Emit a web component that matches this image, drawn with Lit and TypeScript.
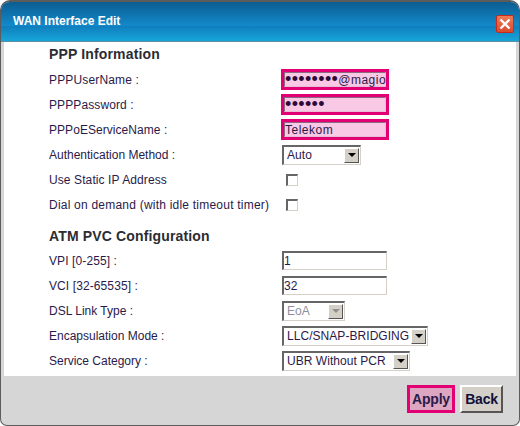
import { LitElement, html, css } from 'lit';
import { customElement } from 'lit/decorators.js';

@customElement('app-root')
export class AppRoot extends LitElement {
  static styles = css`
    :host {
      display: block;
      width: 520px;
      height: 426px;
      background: #fff;
      font-family: 'Liberation Sans', Arial, sans-serif;
      font-size: 12px;
      color: #2a1a4a;
    }
    .win {
      box-sizing: border-box;
      width: 520px;
      height: 426px;
      border: 1px solid #5c5c5c;
      border-top-width: 2px;
      border-radius: 10px 10px 7px 7px;
      overflow: hidden;
      background: #d6d6d6;
      display: flex;
      flex-direction: column;
    }
    .head {
      box-sizing: border-box;
      height: 40px;
      flex: none;
      padding: 0 5px 0 12px;
      display: flex;
      align-items: center;
      justify-content: space-between;
      background: linear-gradient(#0b5d90 0, #1389cb 24px, #0f7dbd 24px, #17a6d8 39px, #5f8fa5 39px);
    }
    .title {
      color: #fff;
      font-weight: bold;
      font-size: 12px;
      margin-top: -2px;
    }
    .close {
      box-sizing: border-box;
      width: 18px;
      height: 18px;
      margin-top: 4px;
      border: 1px solid #c62a1b;
      border-radius: 2px;
      background: linear-gradient(#ee7b58, #da4a2c);
      display: block;
    }
    .body {
      flex: none;
      height: 334px;
      margin: 0 3px;
      background: #fff;
      padding: 0 0 0 45px;
      box-sizing: border-box;
    }
    h2 {
      margin: 0;
      height: 25px;
      line-height: 25px;
      font-size: 14px;
      color: #2c2c33;
      letter-spacing: 0.15px;
    }
    h2.second {
      margin-top: 7px;
      height: 24px;
    }
    .row {
      height: 25px;
      display: flex;
      align-items: center;
    }
    .label {
      width: 233px;
      flex: none;
      white-space: nowrap;
    }
    input[type='text'],
    .field {
      box-sizing: border-box;
      width: 105px;
      height: 19px;
      margin: 0;
      padding: 0;
      border: 2px solid #666;
      border-right: 1px solid #d4d0c8;
      border-bottom: 1px solid #d4d0c8;
      background: #fff;
      color: #2a1a4a;
      font: 12px 'Liberation Sans', Arial, sans-serif;
      letter-spacing: 0.2px;
      outline: none;
    }
    .pink {
      box-sizing: border-box;
      width: 108px;
      height: 21px;
      margin-left: -1px;
      border: 3px solid #e20074;
      display: flex;
    }
    .pink .field {
      width: 102px;
      height: 15px;
      border: 1px solid #8a6a80;
      border-right-color: #e4c0d4;
      border-bottom-color: #e4c0d4;
      background: #f9c8e4;
      line-height: 14px;
      letter-spacing: 0.5px;
      white-space: nowrap;
    }
    .dots {
      font-size: 18px;
      line-height: 0;
      letter-spacing: 0.35px;
      vertical-align: -1px;
      color: #2c0a3a;
    }
    .sel {
      box-sizing: border-box;
      height: 20px;
      display: flex;
      align-items: center;
      justify-content: space-between;
      border: 2px solid #666;
      border-right: 1px solid #d4d0c8;
      border-bottom: 1px solid #d4d0c8;
      padding-left: 3px;
      background: #fff;
      white-space: nowrap;
      letter-spacing: 0.05px;
    }
    .sel.off {
      color: #8f8f9c;
    }
    .arrow {
      box-sizing: border-box;
      width: 15px;
      height: 15px;
      flex: none;
      margin-right: 1px;
      background: #d4d0c8;
      border: 1px solid #fff;
      border-right-color: #555;
      border-bottom-color: #555;
      display: flex;
      align-items: center;
      justify-content: center;
    }
    .arrow::after {
      content: '';
      border: 4px solid transparent;
      border-top: 4px solid #000;
      border-bottom: 0;
    }
    .off .arrow::after {
      border-top-color: #8f8f8f;
    }
    input[type='checkbox'] {
      appearance: none;
      box-sizing: border-box;
      width: 12px;
      height: 12px;
      margin: 0 0 0 4px;
      border: 2px solid #666;
      border-right: 1px solid #d4d0c8;
      border-bottom: 1px solid #d4d0c8;
      background: #fff;
    }
    .foot {
      flex: 1;
      display: flex;
      justify-content: flex-end;
      gap: 5px;
      padding: 9px 16px 0 0;
    }
    button {
      box-sizing: border-box;
      height: 28px;
      padding: 0;
      font: bold 14px 'Liberation Sans', Arial, sans-serif;
      letter-spacing: -0.2px;
      color: #2a1a4a;
    }
    .apply {
      width: 48px;
      border: 3px solid #e20074;
      background: #dda6c0;
    }
    .back {
      width: 43px;
      border: 2px solid;
      border-color: #fff #555 #555 #fff;
      background: #d4d0c8;
      color: #10103a;
    }
  `;

  private sel(text: string, width: number, off = false) {
    return html`<div class="sel ${off ? 'off' : ''}" style="width:${width}px">
      <span>${text}</span><span class="arrow"></span>
    </div>`;
  }

  // spacing: the reference text is hinted, so each label runs a little wider or narrower
  private row(label: string, spacing: number, control: unknown) {
    return html`<div class="row">
      <span class="label" style="letter-spacing:${spacing}px">${label}</span>${control}
    </div>`;
  }

  private pink(dots: string, text: string) {
    return html`<div class="pink">
      <div class="field"><span class="dots">${dots}</span>${text}</div>
    </div>`;
  }

  render() {
    return html`
      <div class="win">
        <div class="head">
          <span class="title">WAN Interface Edit</span>
          <svg class="close" viewBox="0 0 16 16">
            <path d="M3.5 3.5 12.5 12.5M12.5 3.5 3.5 12.5" stroke="#fff" stroke-width="2.4" />
          </svg>
        </div>
        <div class="body">
          <h2>PPP Information</h2>
          ${this.row('PPPUserName :', 0.15, this.pink('••••••••', '@magio'))}
          ${this.row('PPPPassword :', 0.1, this.pink('••••••', ''))}
          ${this.row('PPPoEServiceName :', 0.05, this.pink('', 'Telekom'))}
          ${this.row('Authentication Method :', 0, this.sel('Auto', 79))}
          ${this.row('Use Static IP Address', 0.1, html`<input type="checkbox" />`)}
          ${this.row('Dial on demand (with idle timeout timer)', 0.22, html`<input type="checkbox" />`)}
          <h2 class="second">ATM PVC Configuration</h2>
          ${this.row('VPI [0-255] :', 0.1, html`<input type="text" value="1" />`)}
          ${this.row('VCI [32-65535] :', 0.1, html`<input type="text" value="32" />`)}
          ${this.row('DSL Link Type :', 0, this.sel('EoA', 63, true))}
          ${this.row('Encapsulation Mode :', 0, this.sel('LLC/SNAP-BRIDGING', 146))}
          ${this.row('Service Category :', 0, this.sel('UBR Without PCR', 128))}
        </div>
        <div class="foot">
          <button class="apply">Apply</button>
          <button class="back">Back</button>
        </div>
      </div>
    `;
  }
}
